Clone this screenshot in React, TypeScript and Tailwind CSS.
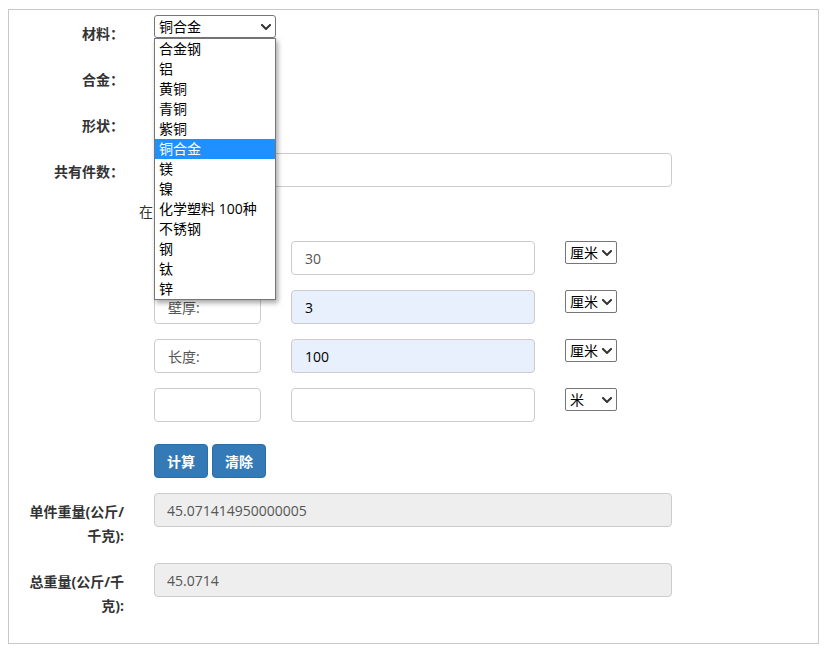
import React from "react";

const MATERIALS = [
    "合金钢",
    "铝",
    "黄铜",
    "青铜",
    "紫铜",
    "铜合金",
    "镁",
    "镍",
    "化学塑料 100种",
    "不锈钢",
    "钢",
    "钛",
    "锌",
];

const DIMENSIONS = [
    { label: "", value: "30", unit: "厘米", filled: false, muted: true },
    { label: "壁厚:", value: "3", unit: "厘米", filled: true, muted: false },
    { label: "长度:", value: "100", unit: "厘米", filled: true, muted: false },
    { label: "", value: "", unit: "米", filled: false, muted: false },
];

function Chevron({ className }: { className?: string }) {
    return (
        <svg viewBox="0 0 10 6" className={className} fill="none">
            <path d="M1 1l4 4 4-4" stroke="#333" strokeWidth="2" strokeLinecap="square" />
        </svg>
    );
}

function Label({ children }: { children: React.ReactNode }) {
    return (
        <div className="w-[115px] shrink-0 pl-[15px] pt-[7px] text-right text-[14px] font-bold leading-[24px] text-[#333]">
            {children}
        </div>
    );
}

function FakeSelect({ value, className }: { value: string; className: string }) {
    return (
        <div
            className={`flex items-center justify-between border border-[#767676] rounded-[2px] bg-white pl-[4px] pr-[4px] text-[14px] text-black ${className}`}
        >
            <span>{value}</span>
            <Chevron className="h-[6px] w-[10px]" />
        </div>
    );
}

export default function App() {
    return (
        <div className="min-h-[658px] bg-white pl-[8px] pt-[9px] font-['Open_Sans','Noto_Sans_CJK_SC',sans-serif] text-[14px] text-[#333]">
            <div className="w-[811px] border border-[#c8c8c8] pb-[10px] pt-[5px]">
                {/* 材料 - dropdown shown open */}
                <div className="mb-[15px] flex items-start">
                    <Label>材料：</Label>
                    <div className="relative ml-[30px] self-start">
                        <FakeSelect value="铜合金" className="h-[23px] w-[122px] rounded-[3px]" />
                        <div className="absolute left-0 top-[23px] z-10 w-[122px] border border-[#767676] bg-white shadow-[2px_3px_5px_rgba(0,0,0,0.35)]">
                            {MATERIALS.map((m) => (
                                <div
                                    key={m}
                                    className={
                                        m === "铜合金"
                                            ? "h-[20px] bg-[#1e90ff] pl-[4px] leading-[20px] text-white"
                                            : "h-[20px] pl-[4px] leading-[20px] text-black"
                                    }
                                >
                                    {m}
                                </div>
                            ))}
                        </div>
                    </div>
                </div>

                <div className="mb-[15px] flex">
                    <Label>合金：</Label>
                </div>

                <div className="mb-[15px] flex">
                    <Label>形状：</Label>
                </div>

                <div className="mb-[15px] flex">
                    <Label>共有件数：</Label>
                    <input
                        className="ml-[30px] h-[34px] w-[518px] rounded-[4px] border border-[#ccc] px-[12px] outline-none"
                        defaultValue=""
                    />
                </div>

                <div className="mb-[19px] pl-[130px] leading-[20px] text-[#333]">在</div>

                {DIMENSIONS.map((d, i) => (
                    <div key={i} className="mb-[15px] flex pl-[145px]">
                        <div className="flex h-[34px] w-[107px] items-center rounded-[4px] border border-[#ccc] pl-[13px] text-[#555]">
                            {d.label}
                        </div>
                        <div
                            className={`ml-[30px] flex h-[34px] w-[244px] items-center rounded-[4px] border border-[#ccc] pl-[13px] ${
                                d.filled ? "bg-[#e8f0fe] text-black" : "bg-white"
                            } ${d.muted ? "text-[#555]" : ""}`}
                        >
                            {d.value}
                        </div>
                        <FakeSelect value={d.unit} className="ml-[30px] h-[23px] w-[52px] pl-[2px]" />
                    </div>
                ))}

                <div className="mb-[15px] mt-[22px] flex gap-[4px] pl-[145px]">
                    <button className="h-[34px] w-[54px] rounded-[4px] border border-[#2e6da4] bg-[#337ab7] font-bold text-white">
                        计算
                    </button>
                    <button className="h-[34px] w-[54px] rounded-[4px] border border-[#2e6da4] bg-[#337ab7] font-bold text-white">
                        清除
                    </button>
                </div>

                <div className="mb-[15px] flex">
                    <Label>单件重量(公斤/千克):</Label>
                    <div className="ml-[30px] flex h-[34px] w-[518px] items-center rounded-[4px] border border-[#ccc] bg-[#eee] pl-[12px] text-[#555]">
                        45.071414950000005
                    </div>
                </div>

                <div className="mb-[15px] flex">
                    <Label>总重量(公斤/千克):</Label>
                    <div className="ml-[30px] flex h-[34px] w-[518px] items-center rounded-[4px] border border-[#ccc] bg-[#eee] pl-[12px] text-[#555]">
                        45.0714
                    </div>
                </div>
            </div>
        </div>
    );
}
